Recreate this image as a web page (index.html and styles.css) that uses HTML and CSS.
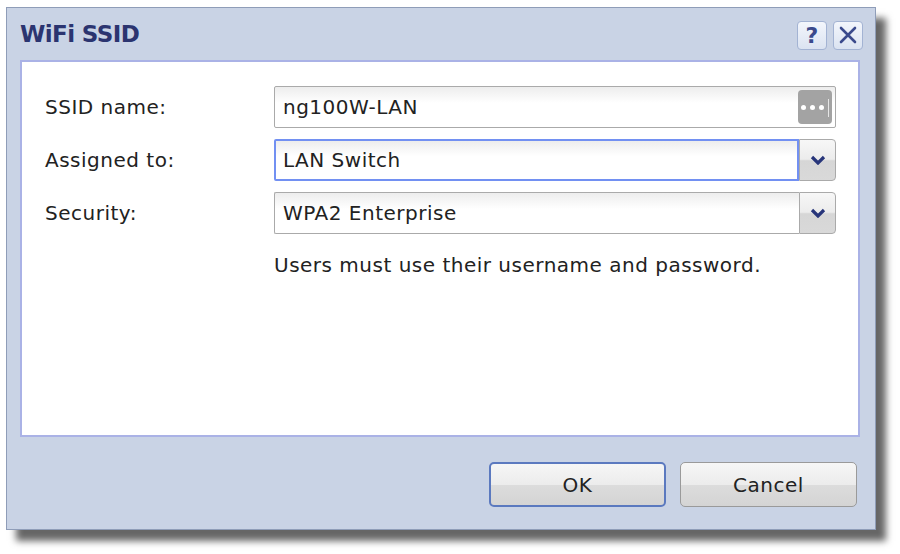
FILE: index.html
```html
<!DOCTYPE html>
<html lang="en">
<head>
    <meta charset="UTF-8">
    <meta name="viewport" content="width=device-width, initial-scale=1.0">
    <title>WiFi SSID</title>
    <link rel="stylesheet" href="styles.css">
</head>
<body>
    <div class="dialog">
        <div class="title-bar">
            <h2>WiFi SSID</h2>
            <div class="title-buttons">
                <button type="button" class="title-btn help-btn">?</button>
                <button type="button" class="title-btn close-btn">
                    <svg width="18" height="18" viewBox="0 0 18 18">
                        <path d="M2 2 L16 16 M16 2 L2 16" stroke="#3b4a8c" stroke-width="2.6" stroke-linecap="round" fill="none"/>
                    </svg>
                </button>
            </div>
        </div>
        <div class="panel">
            <div class="form-row">
                <label for="ssid-name">SSID name:</label>
                <div class="text-box">
                    <span class="value">ng100W-LAN</span>
                    <span class="more-btn">
                        <span class="dot"></span><span class="dot"></span><span class="dot"></span>
                        <span class="bar"></span>
                    </span>
                </div>
            </div>
            <div class="form-row">
                <label>Assigned to:</label>
                <div class="combo">
                    <div class="combo-text focused">LAN Switch</div>
                    <div class="combo-arrow">
                        <svg width="16" height="10" viewBox="0 0 16 10">
                            <path d="M2 2 L8 8 L14 2" stroke="#27357a" stroke-width="3.2" fill="none"/>
                        </svg>
                    </div>
                </div>
            </div>
            <div class="form-row">
                <label>Security:</label>
                <div class="combo">
                    <div class="combo-text">WPA2 Enterprise</div>
                    <div class="combo-arrow">
                        <svg width="16" height="10" viewBox="0 0 16 10">
                            <path d="M2 2 L8 8 L14 2" stroke="#27357a" stroke-width="3.2" fill="none"/>
                        </svg>
                    </div>
                </div>
            </div>
            <p class="hint">Users must use their username and password.</p>
        </div>
        <div class="footer">
            <button type="button" class="dlg-btn default-btn">OK</button>
            <button type="button" class="dlg-btn">Cancel</button>
        </div>
    </div>
</body>
</html>
```

FILE: styles.css
```css
body {
    margin: 0;
    padding: 7px 0 0 6px;
    min-height: 554px;
    box-sizing: border-box;
    background: #fff;
    font-family: "DejaVu Sans", Tahoma, sans-serif;
    color: #222;
    letter-spacing: 0.5px;
}
.dialog {
    box-sizing: border-box;
    width: 870px;
    height: 523px;
    border: 1px solid #8f9db8;
    background: #c9d3e5;
    padding: 0 15px 0 13px;
    display: flex;
    flex-direction: column;
    box-shadow: 10px 11px 7px rgba(0, 0, 0, 0.6);
}
.title-bar {
    height: 52px;
    display: flex;
    align-items: center;
    justify-content: space-between;
}
.title-bar h2 {
    margin: 0;
    font-family: "DejaVu Sans", Tahoma, sans-serif;
    font-size: 23px;
    font-weight: bold;
    color: #2b3470;
    letter-spacing: -0.6px;
}
.title-buttons {
    display: flex;
    gap: 6px;
    margin-right: -3px;
    margin-top: 2px;
}
.title-btn {
    box-sizing: border-box;
    width: 30px;
    height: 29px;
    padding: 0;
    border: 1px solid #a3b3d3;
    border-radius: 4px;
    background: linear-gradient(#f3f6fc, #dbe3f1);
    display: flex;
    align-items: center;
    justify-content: center;
    color: #3b4a8c;
    font-family: "DejaVu Sans", sans-serif;
    font-size: 22px;
    font-weight: bold;
}
.panel {
    box-sizing: border-box;
    height: 377px;
    background: #fff;
    border: 2px solid #aab2e6;
    padding: 24px 22px 0 23px;
}
.form-row {
    display: flex;
    align-items: center;
    height: 42px;
    margin-bottom: 11px;
}
.form-row label {
    width: 229px;
    font-size: 20px;
}
.text-box {
    flex: 1;
    box-sizing: border-box;
    height: 42px;
    border: 1px solid #aaa;
    border-radius: 2px;
    background: linear-gradient(#ededed, #fff 40%);
    display: flex;
    align-items: center;
    justify-content: space-between;
    padding: 0 3px 0 8px;
    font-size: 20px;
}
.more-btn {
    position: relative;
    width: 34px;
    height: 34px;
    border-radius: 4px;
    background: #a3a3a3;
    display: flex;
    align-items: center;
    justify-content: center;
    gap: 4px;
    padding-right: 6px;
    box-sizing: border-box;
}
.more-btn .dot {
    width: 5px;
    height: 5px;
    border-radius: 50%;
    background: #fff;
}
.more-btn .bar {
    position: absolute;
    right: 3px;
    top: 9px;
    width: 1px;
    height: 18px;
    background: #e6e6e6;
}
.combo {
    flex: 1;
    display: flex;
    height: 42px;
}
.combo-text {
    flex: 1;
    box-sizing: border-box;
    border: 1px solid #aaa;
    border-right: none;
    border-radius: 2px 0 0 2px;
    background: linear-gradient(#ededed, #fff 40%);
    display: flex;
    align-items: center;
    padding-left: 8px;
    font-size: 20px;
}
.combo-text.focused {
    border: 2px solid #7290f2;
    padding-left: 7px;
}
.combo-arrow {
    box-sizing: border-box;
    width: 37px;
    border: 1px solid #aaa;
    border-radius: 0 4px 4px 0;
    background: linear-gradient(#f7f7f7, #ececec 48%, #d6d6d6 52%, #d9d9d9);
    display: flex;
    align-items: center;
    justify-content: center;
}
.hint {
    margin: 19px 0 0 229px;
    font-size: 20px;
    line-height: 24px;
}
.footer {
    flex: 1;
    display: flex;
    align-items: center;
    justify-content: flex-end;
    gap: 14px;
    padding-right: 3px;
    padding-top: 3px;
}
.dlg-btn {
    box-sizing: border-box;
    width: 177px;
    height: 45px;
    border: 1px solid #9a9a9a;
    border-radius: 5px;
    background: linear-gradient(#f6f6f6, #ececec 50%, #dcdcdc 52%, #d4d4d4);
    font-family: "DejaVu Sans", Tahoma, sans-serif;
    font-size: 20px;
    letter-spacing: 0.5px;
    color: #222;
}
.default-btn {
    border: 2px solid #5b79bf;
}
```
